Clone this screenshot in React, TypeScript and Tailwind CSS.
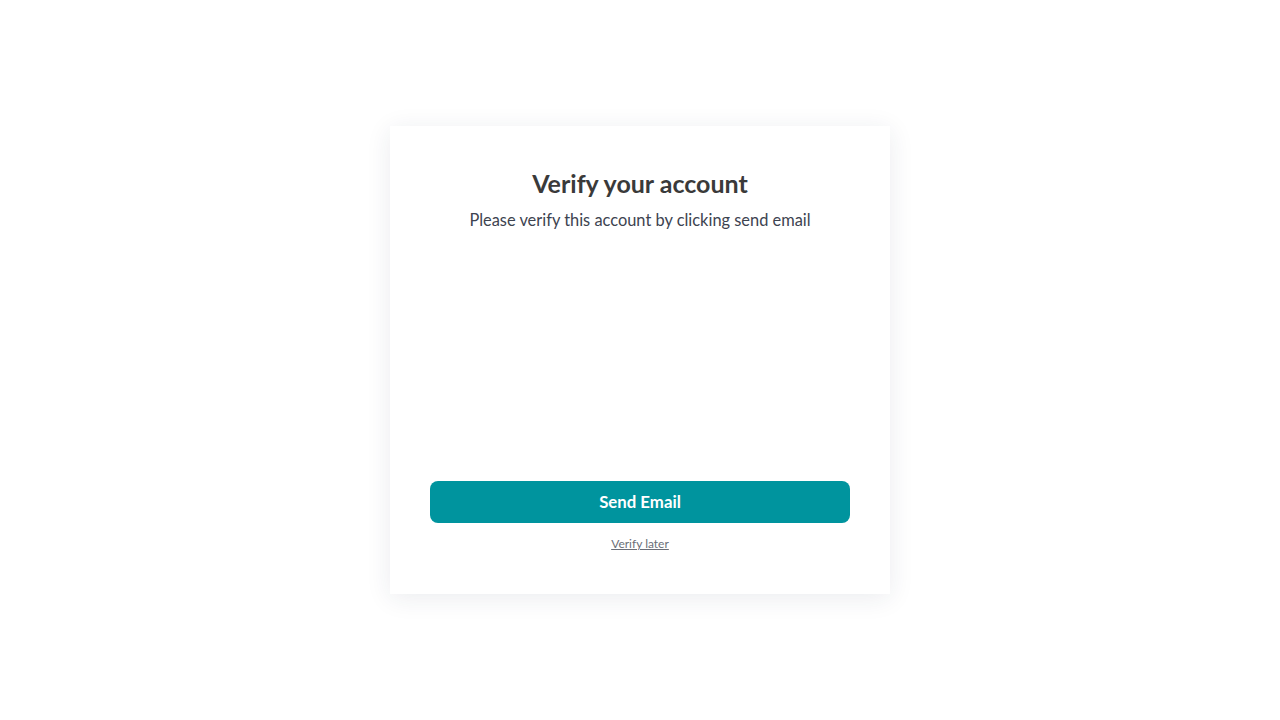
export default function App() {
  return (
    <div className="flex min-h-screen w-full items-center justify-center bg-white font-['Lato','Noto_Sans',sans-serif]">
      <div className="flex h-[468px] w-[500px] flex-col bg-white px-10 pt-[41px] pb-[42px] shadow-[0_4px_24px_rgba(30,40,80,0.09)]">
        <h1 className="text-center text-[25px] leading-8 font-bold text-[#3a3a3a]">
          Verify your account
        </h1>
        <p className="mt-[9px] text-center text-[16.4px] leading-6 text-[#3d4350]">
          Please verify this account by clicking send email
        </p>

        <div className="flex-1" />

        <button className="h-[42px] w-full rounded-lg bg-[#00949e] text-[16.8px] font-bold text-white">
          Send Email
        </button>
        <div className="mt-[13px] text-center text-[12px] leading-4">
          <a href="#" className="text-[#6b6f78] underline">
            Verify later
          </a>
        </div>
      </div>
    </div>
  );
}
